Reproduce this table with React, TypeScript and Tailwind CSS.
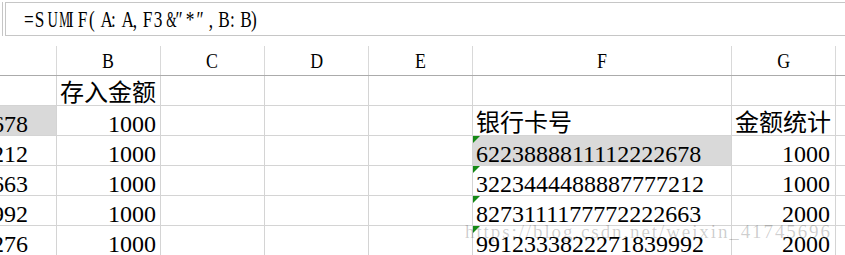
import React from "react";

const serifFam = '"Liberation Serif", "Times New Roman", serif';
const serif = { fontFamily: serifFam };
const cjk = { fontFamily: '"Noto Sans CJK SC", "Liberation Serif", sans-serif' };

const widths = ["w-[57px]", "w-[104px]", "w-[104px]", "w-[104px]", "w-[104px]", "w-[259px]", "w-[104px]", "w-[10px]"];

type Cell = {
  text?: string;
  align?: "left" | "right";
  cjk?: boolean;
  grey?: boolean;
  tri?: boolean;
  pr?: string;
};

function DataCell({ c, w }: { c: Cell; w: string }) {
  const justify = c.align === "right" ? "justify-end" : "justify-start";
  return (
    <div
      className={`${w} relative shrink-0 h-[30px] border-r border-b border-[#d4d4d4] overflow-hidden flex items-end ${justify} ${
        c.grey ? "bg-[#d9d9d9]" : "bg-white"
      } ${c.pr ?? ""} ${c.align === "left" ? "pl-[3px]" : ""}`}
    >
      {c.tri && (
        <div className="absolute left-0 top-0 w-0 h-0 border-t-[7px] border-r-[7px] border-t-[#168a16] border-r-transparent" />
      )}
      {c.text &&
        (c.cjk ? (
          <span className="text-[24px] leading-[26px] text-black whitespace-nowrap pb-[1px]" style={cjk}>
            {c.text}
          </span>
        ) : (
          <span className="text-[24px] leading-[22px] text-black whitespace-nowrap" style={serif}>
            {c.text}
          </span>
        ))}
    </div>
  );
}

const rows: Cell[][] = [
  [{}, { text: "存入金额", align: "left", cjk: true }, {}, {}, {}, {}, {}, {}],
  [
    { text: "6223888811112222678", align: "right", grey: true, pr: "pr-[28px]" },
    { text: "1000", align: "right", pr: "pr-[4px]" },
    {},
    {},
    {},
    { text: "银行卡号", align: "left", cjk: true },
    { text: "金额统计", align: "left", cjk: true },
    {},
  ],
  [
    { text: "3223444488887777212", align: "right", pr: "pr-[28px]" },
    { text: "1000", align: "right", pr: "pr-[4px]" },
    {},
    {},
    {},
    { text: "6223888811112222678", align: "left", grey: true, tri: true },
    { text: "1000", align: "right", pr: "pr-[5px]" },
    {},
  ],
  [
    { text: "8273111177772222663", align: "right", pr: "pr-[28px]" },
    { text: "1000", align: "right", pr: "pr-[4px]" },
    {},
    {},
    {},
    { text: "3223444488887777212", align: "left", tri: true },
    { text: "1000", align: "right", pr: "pr-[5px]" },
    {},
  ],
  [
    { text: "9912333822271839992", align: "right", pr: "pr-[28px]" },
    { text: "1000", align: "right", pr: "pr-[4px]" },
    {},
    {},
    {},
    { text: "8273111177772222663", align: "left", tri: true },
    { text: "2000", align: "right", pr: "pr-[5px]" },
    {},
  ],
  [
    { text: "1234567890123456276", align: "right", pr: "pr-[28px]" },
    { text: "1000", align: "right", pr: "pr-[4px]" },
    {},
    {},
    {},
    { text: "9912333822271839992", align: "left", tri: true },
    { text: "2000", align: "right", pr: "pr-[5px]" },
    {},
  ],
];

const headers = ["", "B", "C", "D", "E", "F", "G", ""];
const formula = "=SUMIF(A:A,F3&″*″,B:B)".split("");

function scaleFor(ch: string) {
  if (ch === "M") return "scale-x-[0.5]";
  if (ch === "U") return "scale-x-[0.6]";
  if (ch === "&") return "scale-x-[0.55]";
  return "scale-x-[0.72]";
}

export default function App() {
  return (
    <div className="relative w-[845px] h-[255px] overflow-hidden bg-white" style={serif}>
      {/* formula bar */}
      <div className="h-[46px] flex items-start pt-[2px]">
        <div className="w-[3px] h-[34px] border-r border-[#c6c6c6]" />
        <div className="ml-[2px] flex-1 h-[34px] border-t border-b border-l border-[#c6c6c6] flex items-end pl-[16px] pb-[4px]">
          <div className="flex items-end text-black">
            {formula.map((ch, i) => (
              <span key={i} className="inline-block w-[10.8px] text-center text-[24px] leading-[24px]">
                <span className={`inline-block ${scaleFor(ch)}`}>{ch}</span>
              </span>
            ))}
          </div>
        </div>
      </div>
      {/* header row */}
      <div className="flex h-[30px] border-b border-[#ababab]">
        {headers.map((h, i) => (
          <div
            key={i}
            className={`${widths[i]} shrink-0 h-full border-r border-[#d9d9d9] flex items-end justify-center pb-[2px]`}
          >
            {h && (
              <span className="inline-block scale-x-[0.85] text-[21px] leading-[24px] text-black">
                {h}
              </span>
            )}
          </div>
        ))}
      </div>
      {/* data rows */}
      {rows.map((r, ri) => (
        <div key={ri} className="flex">
          {r.map((c, ci) => (
            <DataCell key={ci} c={c} w={widths[ci]} />
          ))}
        </div>
      ))}
      {/* watermark overlay */}
      <div className="absolute left-[465px] top-[222px] text-[19px] leading-[20px] tracking-[1.9px] text-black/20 whitespace-nowrap pointer-events-none">
        https://blog.csdn.net/weixin_41745696
      </div>
    </div>
  );
}
